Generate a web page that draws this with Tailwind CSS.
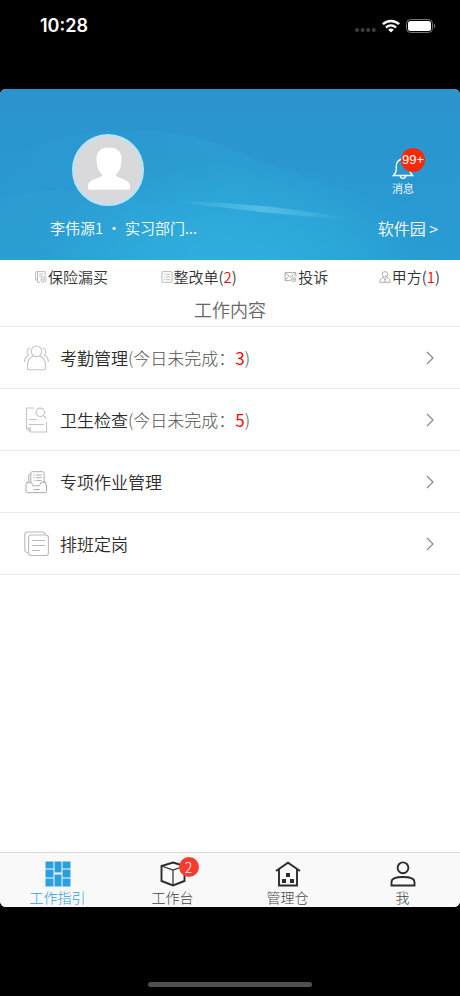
<!DOCTYPE html>
<html lang="zh-CN">
<head>
  <meta charset="UTF-8">
  <meta name="viewport" content="width=device-width, initial-scale=1.0">
  <title>工作指引</title>
  <script src="https://cdn.jsdelivr.net/npm/@tailwindcss/browser@4"></script>
</head>
<body class="bg-black font-['Noto_Sans_CJK_SC',sans-serif]">
  <div class="flex flex-col min-h-screen">

    <!-- Status bar -->
    <header class="flex items-center justify-between h-[52px] mb-[37px] pl-10 pr-6 text-white">
      <span class="font-['Inter',sans-serif] text-lg font-semibold">10:28</span>
      <div class="flex items-center gap-1.5">
        <svg class="w-[21px] h-4" viewBox="0 0 21 16" fill="#3d3d3f" aria-hidden="true">
          <circle cx="2" cy="12" r="2"/><circle cx="7.600" cy="12" r="2"/><circle cx="13.200" cy="12" r="2"/><circle cx="18.800" cy="12" r="2"/>
        </svg>
        <svg class="w-[18px] h-[14px]" viewBox="0 0 18 14" fill="none" stroke="#fff" stroke-width="2.500" aria-hidden="true">
          <path d="M.9 5.200C5.500.9 12.500.9 17.100 5.200"/>
          <path d="M4 8.500c2.900-2.700 7.100-2.700 10 0"/>
          <path d="M6.200 10.700c1.700-1.500 3.900-1.500 5.600 0L9 13.600z" fill="#fff" stroke="none"/>
        </svg>
        <svg class="w-[30px] h-[14px]" viewBox="0 0 30 14" aria-hidden="true">
          <rect x=".5" y=".5" width="26" height="13" rx="4" fill="none" stroke="#77777a"/>
          <rect x="2" y="2" width="23" height="10" rx="2.500" fill="#fff"/>
          <path d="M28 4.800c1.600.6 1.600 3.800 0 4.400z" fill="#77777a"/>
        </svg>
      </div>
    </header>

    <div class="flex-1 flex flex-col bg-white rounded-md overflow-hidden">

      <!-- Profile banner -->
      <section class="relative bg-linear-to-b from-[#2b93cd] to-[#289cd3] text-white">
        <svg class="absolute inset-0 w-full h-full" viewBox="0 0 460 171" preserveAspectRatio="none" aria-hidden="true">
          <defs>
            <radialGradient id="glow" cx="230" cy="185" r="190" gradientUnits="userSpaceOnUse" gradientTransform="translate(0 74) scale(1 .6)">
              <stop offset="0" stop-color="#2fb4e2"/>
              <stop offset="1" stop-color="#2fb4e2" stop-opacity="0"/>
            </radialGradient>
            <linearGradient id="band" x1="0" x2="1">
              <stop offset="0" stop-color="#2fabda" stop-opacity="0"/>
              <stop offset=".5" stop-color="#2fabda" stop-opacity=".3"/>
              <stop offset="1" stop-color="#2fabda" stop-opacity="0"/>
            </linearGradient>
            <linearGradient id="streak" x1="0" x2="1">
              <stop offset="0" stop-color="#7cd3ee" stop-opacity="0"/>
              <stop offset=".5" stop-color="#7cd3ee" stop-opacity=".5"/>
              <stop offset="1" stop-color="#7cd3ee" stop-opacity="0"/>
            </linearGradient>
          </defs>
          <path d="M0 0h460v171H0z" fill="url(#glow)"/>
          <path d="M0 70C90 30 180 35 240 64c80 32 140 50 220 62v45H0z" fill="url(#band)"/>
          <path d="M0 108c60-12 110-8 160 10 60 22 110 40 150 53H0z" fill="#37b0dc" opacity=".14"/>
          <path d="M170 112c70 1 130 8 185 19-70-5-125-11-185-19z" fill="url(#streak)"/>
        </svg>
        <div class="relative flex justify-between pl-[50px] pr-[22px] pt-[45px] pb-5">
          <div>
            <svg class="ml-[22px] w-[72px] h-[72px]" viewBox="0 0 72 72" role="img" aria-label="头像">
              <circle cx="36" cy="36" r="34.800" fill="#d9d9db" stroke="#b9e3f7" stroke-width="2.400"/>
              <path d="M37 13.500c-8 0-12.500 4-12.500 11 0 8 2 13.500 6 16.500-2 3.500-14.500 4-14.500 11v1.500c0 1.500.8 2.300 2.300 2.300h37.400c1.500 0 2.300-.8 2.300-2.300V52c0-7-12.500-7.500-14.500-11 4-3 6-8.500 6-16.500 0-7-4.500-11-12.500-11z" fill="#fff"/>
            </svg>
            <p class="mt-2.5 text-[15px] leading-6 font-[350]">李伟源1 · 实习部门...</p>
          </div>
          <div class="flex flex-col items-end justify-between">
            <button class="relative flex flex-col items-center mt-[22px] mr-6">
              <svg class="w-[22px] h-6" viewBox="0 0 22 24" fill="none" stroke="#fff" stroke-width="1.400" aria-hidden="true">
                <path d="M1.500 19.500h19c-2-2-2.800-3.500-2.800-6V10c0-4-2.700-7-6.700-7s-6.700 3-6.700 7v3.500c0 2.500-.8 4-2.800 6zM11 3V1"/>
                <path d="M8.300 19.800c.3 3.400 5.100 3.400 5.400 0"/>
              </svg>
              <span class="text-[11px] leading-4 font-[350]">消息</span>
              <span class="absolute -top-2 left-[9px] size-6 rounded-full bg-[#fd2905] text-center font-['Liberation_Sans',sans-serif] text-[13px] leading-6">99+</span>
            </button>
            <a href="#" class="text-base leading-6 font-[350]">软件园 &gt;</a>
          </div>
        </div>
      </section>

      <!-- Shortcuts -->
      <nav class="grid grid-cols-[126fr_124fr_95fr_60fr] pl-[35px] pr-5 pt-1.5 text-[15px] leading-[22px] font-[350] text-[#333] whitespace-nowrap">
        <a href="#" class="flex items-center gap-px">
          <svg class="w-3 h-3" viewBox="0 0 12 12" fill="none" stroke="#aaa" stroke-width=".8" aria-hidden="true">
            <path d="M5 11.300H2.500V9H.6M2.500 9V1.800C2.500 1 2 .6 1.500.6S.6 1 .6 1.800V9M1.500.6h8.700v5M4.300 3h4M4.300 5.200h3"/>
            <path d="M8.600 6l2.500 1.300v2.600l-2.500 1.400-2.500-1.400V7.300z"/><circle cx="8.600" cy="8.600" r=".8"/>
          </svg>
          保险漏买
        </a>
        <a href="#" class="flex items-center gap-px">
          <svg class="w-3 h-3" viewBox="0 0 12 12" fill="none" stroke="#aaa" stroke-width=".8" aria-hidden="true">
            <rect x=".9" y=".6" width="10.200" height="10.800" rx="1"/>
            <path d="M2.800 3.300h1M5 3.300h4.200M2.800 6h1M5 6h4.200M2.800 8.700h1M5 8.700h4.200"/>
          </svg>
          <span>整改单(<span class="text-[#e60c0c]">2</span>)</span>
        </a>
        <a href="#" class="flex items-center gap-px">
          <svg class="w-[13px] h-3" viewBox="0 0 12 12" fill="none" stroke="#999" stroke-width=".8" aria-hidden="true">
            <path d="M6 9.600H.6V1.600h10.800v4M.6 2l5.400 4 5.400-4M.6 9.600L4 5.500"/>
            <path d="M9.200 6.200l2 1.200v2.200l-2 1.200-2-1.200V7.400z"/><circle cx="9.200" cy="8.500" r=".6"/>
          </svg>
          投诉
        </a>
        <a href="#" class="flex items-center gap-px">
          <svg class="w-3 h-3" viewBox="0 0 12 12" fill="none" stroke="#999" stroke-width=".8" aria-hidden="true">
            <circle cx="6" cy="3.300" r="2.700"/>
            <path d="M4.200 6.500C2 7 .8 8.500.8 11.300h10.400c0-2.800-1.200-4.300-3.400-4.800M4.300 6.600L6 9l1.700-2.400M6 9v2.300"/>
          </svg>
          <span>甲方(<span class="text-[#e60c0c]">1</span>)</span>
        </a>
      </nav>

      <h1 class="pt-2 pb-1 text-lg leading-[26px] text-center font-[350] text-[#666] border-b border-[#ececec]">工作内容</h1>

      <!-- Work list -->
      <ul class="text-[17px] font-[350] text-[#2c2c2c]">
        <li class="border-b border-[#ececec]">
          <a href="#" class="flex items-center h-[61px] pl-6 pr-[26px]">
            <svg class="w-[26px] h-[26px] mr-2.5" viewBox="0 0 26 26" fill="none" stroke="#c4c4c4" stroke-width="1.100" aria-hidden="true">
              <circle cx="12.500" cy="6.300" r="5.300"/>
              <path d="M9.500 11C5.500 12.500 3.500 16 3.500 20v3.500c0 .8.500 1.300 1.300 1.300h15.400c.8 0 1.300-.5 1.300-1.300V20c0-4-2-7.500-6-9"/>
              <path d="M6.300 3C3.300 3.500 1.800 7.500 4.300 10.200 1.800 11.500.6 14 .6 17M18.700 3c3 .5 4.500 4.500 2 7.200 2.500 1.300 3.700 3.800 3.700 6.800"/>
            </svg>
            <span>考勤管理<span class="font-light text-[#555]">(今日未完成：<span class="font-normal text-[#f00808]">3</span>)</span></span>
            <svg class="ml-auto w-2 h-3.5" viewBox="0 0 8 14" fill="none" stroke="#888" stroke-width="1.200" aria-hidden="true"><path d="M1 1l6 6-6 6"/></svg>
          </a>
        </li>
        <li class="border-b border-[#ececec]">
          <a href="#" class="flex items-center h-[61px] pl-6 pr-[26px]">
            <svg class="w-[26px] h-[26px] mr-2.5" viewBox="0 0 26 26" fill="none" stroke="#c4c4c4" stroke-width="1.100" aria-hidden="true">
              <path d="M10 1H2.500v20.500l4 3.500h16V15M2.500 21h4v4M5 12.500h8M5 17.500h15"/>
              <circle cx="16.300" cy="5.300" r="4.200"/><path d="M19.300 8.300l3 3.200"/>
              <path d="M2.500 21.500h4V25z" fill="#d4d4d4" stroke="none"/>
            </svg>
            <span>卫生检查<span class="font-light text-[#555]">(今日未完成：<span class="font-normal text-[#f00808]">5</span>)</span></span>
            <svg class="ml-auto w-2 h-3.5" viewBox="0 0 8 14" fill="none" stroke="#888" stroke-width="1.200" aria-hidden="true"><path d="M1 1l6 6-6 6"/></svg>
          </a>
        </li>
        <li class="border-b border-[#ececec]">
          <a href="#" class="flex items-center h-[61px] pl-6 pr-[26px]">
            <svg class="w-[26px] h-[26px] mr-2.5" viewBox="0 0 26 26" fill="none" stroke="#aaa" stroke-width="1" aria-hidden="true">
              <path d="M5 12.500L2 15.500v6.800c0 .8.500 1.400 1.400 1.400h17.700c.9 0 1.400-.6 1.400-1.400v-6.800l-3-3"/>
              <path d="M2.300 13.300h5l1.700 3.500h6.500l1.700-3.500h5"/>
              <path d="M6.800 13V4.400c0-1 .6-1.700 1.600-1.700h10.200c1 0 1.500.7 1.500 1.700V13M4.800 12V6.500c0-1 .5-1.600 2-1.700"/>
              <path d="M9.500 6h1.200M12 6h5.500M9.500 8.700h1.200M12 8.700h5.500M9.500 11.400h1.200M12 11.400h5.500M9.500 20.500h6"/>
            </svg>
            <span>专项作业管理</span>
            <svg class="ml-auto w-2 h-3.5" viewBox="0 0 8 14" fill="none" stroke="#888" stroke-width="1.200" aria-hidden="true"><path d="M1 1l6 6-6 6"/></svg>
          </a>
        </li>
        <li class="border-b border-[#ececec]">
          <a href="#" class="flex items-center h-[61px] pl-6 pr-[26px]">
            <svg class="w-[26px] h-[26px] mr-2.5" viewBox="0 0 26 26" fill="none" stroke="#bbb" stroke-width="1.100" aria-hidden="true">
              <rect x="4.600" y="4" width="19.800" height="20.500" rx="2.500"/>
              <path d="M4.600 21.500h-1C2 21.500.8 20.500.8 19V3.500C.8 2 2 1 3.600 1h14.600c1.800 0 2.600 1.300 3 3M8 9.500h13M8 14.500h13M8 19.500h8"/>
            </svg>
            <span>排班定岗</span>
            <svg class="ml-auto w-2 h-3.5" viewBox="0 0 8 14" fill="none" stroke="#888" stroke-width="1.200" aria-hidden="true"><path d="M1 1l6 6-6 6"/></svg>
          </a>
        </li>
      </ul>

      <!-- Tab bar -->
      <nav class="mt-auto grid grid-cols-4 bg-[#f9f9f9] border-t border-[#d8d8d8] pt-2 text-sm leading-5 font-light text-[#444]">
        <a href="#" class="flex flex-col items-center text-[#2ba0e0]">
          <svg class="w-[26px] h-[26px]" viewBox="0 0 26 26" fill="#2ba0e0" aria-hidden="true">
            <path d="M.5.500h8v7h-8zM.5 8.500h8v8h-8zM.5 17.500h8v8h-8zM9.500.500h7v11h-7zM9.500 13.500h7v12h-7zM17.500.500h8v7h-8zM17.500 8.500h8v8h-8zM17.500 17.500h8v8h-8z"/>
          </svg>
          工作指引
        </a>
        <a href="#" class="relative flex flex-col items-center">
          <svg class="w-[26px] h-[26px]" viewBox="0 0 26 26" fill="none" stroke="#2c2c2c" stroke-width="1.900" aria-hidden="true">
            <path d="M13 1.500L24.500 5v15L13 24.500 1.500 20V5z"/><path d="M1.500 5L13 9l11.500-4M13 9v15.500" stroke-width="1.200"/>
          </svg>
          工作台
          <span class="absolute -top-1 left-1/2 ml-1.5 size-5 rounded-full bg-[#fb3b30] text-sm leading-5 text-center text-white">2</span>
        </a>
        <a href="#" class="flex flex-col items-center">
          <svg class="w-[26px] h-[26px]" viewBox="0 0 26 26" fill="none" stroke="#2c2c2c" stroke-width="1.900" aria-hidden="true">
            <path d="M1 10L13 1.700 25 10M4 8.500v16h18v-16"/>
            <path d="M11 12h4v4h-4zM7 18h4v4H7zM15 18h4v4h-4z" fill="#2c2c2c" stroke="none"/>
          </svg>
          管理仓
        </a>
        <a href="#" class="flex flex-col items-center">
          <svg class="w-[26px] h-[26px]" viewBox="0 0 26 26" fill="none" stroke="#2c2c2c" stroke-width="1.900" aria-hidden="true">
            <circle cx="13" cy="6.800" r="5.400"/>
            <path d="M1.500 24.500V21c0-3.500 5-5 11.500-5s11.500 1.500 11.500 5v3.500z"/>
          </svg>
          我
        </a>
      </nav>
    </div>

    <!-- Home indicator -->
    <footer class="h-[89px] flex items-end justify-center pb-[9px]">
      <div class="w-[164px] h-[5px] rounded-full bg-[#4f4f4f]"></div>
    </footer>
  </div>
</body>
</html>
